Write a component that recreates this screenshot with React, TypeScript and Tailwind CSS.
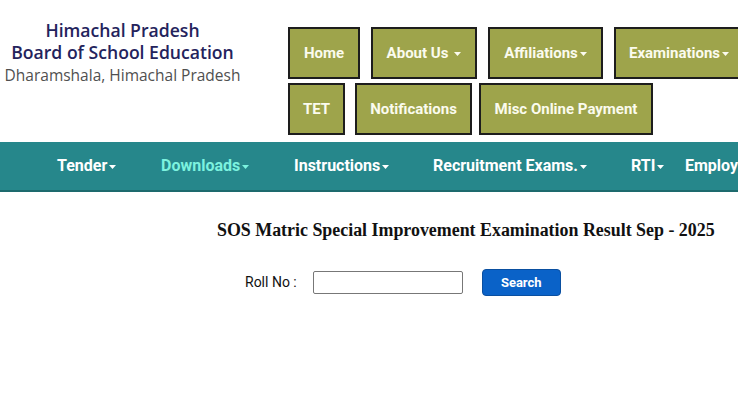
const Caret = ({ className = "" }: { className?: string }) => (
  <svg className={`inline-block w-[7px] h-[4px] ${className}`} viewBox="0 0 7 4" fill="currentColor">
    <path d="M0 0h7L3.5 4z" />
  </svg>
);

interface TopButtonProps {
  label: string;
  width: string;
  caret?: boolean;
  spaced?: boolean;
  extra?: string;
}

const TopButton = ({ label, width, caret, spaced, extra = "" }: TopButtonProps) => (
  <div
    className={`${width} ${extra} h-[52px] shrink-0 flex items-center justify-center bg-[#9ea44b] border-2 border-[#1d1d1d] text-[#fbfbee] text-[15px] font-bold`}
  >
    {label}
    {caret && <Caret className={spaced ? "ml-[6px] mt-[2px]" : "ml-[2px] mt-[2px]"} />}
  </div>
);

const navItems = [
  { label: "Tender", w: "w-[104px]", active: false },
  { label: "Downloads", w: "w-[133px]", active: true },
  { label: "Instructions", w: "w-[139px]", active: false },
  { label: "Recruitment Exams.", w: "w-[198px]", active: false },
  { label: "RTI", w: "w-[54px]", active: false },
];

export default function App() {
  return (
    <div className="w-[738px] h-[415px] overflow-hidden bg-white font-['Roboto',sans-serif]">
      {/* header */}
      <div className="flex h-[142px]">
        <div className="w-[245px] shrink-0 pt-[19px] text-center font-['Open_Sans',sans-serif] leading-[22px]">
          <div className="text-[17.6px] font-semibold text-[#24235c]">Himachal Pradesh</div>
          <div className="text-[17.6px] font-semibold text-[#24235c]">Board of School Education</div>
          <div className="text-[15.5px] text-[#505050] mt-[1px]">Dharamshala, Himachal Pradesh</div>
        </div>
        <div className="ml-[43px] pt-[27px] flex flex-col gap-[4px]">
          <div className="flex gap-[11px]">
            <TopButton label="Home" width="w-[72px]" />
            <TopButton label="About Us" width="w-[106px]" caret spaced />
            <TopButton label="Affiliations" width="w-[115px]" caret />
            <TopButton label="Examinations" width="w-[130px]" caret />
          </div>
          <div className="flex">
            <TopButton label="TET" width="w-[57px]" />
            <TopButton label="Notifications" width="w-[117px]" extra="ml-[10px]" />
            <TopButton label="Misc Online Payment" width="w-[174px]" extra="ml-[7px]" />
          </div>
        </div>
      </div>

      {/* main nav */}
      <div className="h-[50px] bg-[#26878b] border-b-2 border-[#1d6a6d] flex items-center whitespace-nowrap text-[16px] font-bold pl-[57px]">
        {navItems.map((item) => (
          <div
            key={item.label}
            className={`${item.w} shrink-0 flex items-center ${item.active ? "text-[#7cf2df]" : "text-white"}`}
          >
            {item.label}
            <Caret className="ml-[2px] mt-[2px]" />
          </div>
        ))}
        <div className="text-white">Employment</div>
      </div>

      {/* content */}
      <div className="pl-[217px] pt-[25px] whitespace-nowrap">
        <h1 className="font-['Liberation_Serif',serif] font-bold text-[17.9px] text-[#111]">
          SOS Matric Special Improvement Examination Result Sep - 2025
        </h1>
      </div>
      <div className="flex items-center pl-[245px] mt-[25px]">
        <span className="text-[14px] text-[#111]">Roll No :</span>
        <input
          type="text"
          className="ml-[16px] w-[150px] h-[23px] border border-[#777] rounded-[2px] outline-none"
        />
        <button className="ml-[19px] w-[79px] h-[27px] rounded-[4px] bg-[#0a62c8] border border-[#0a4fa0] text-white text-[13px] font-bold">
          Search
        </button>
      </div>
    </div>
  );
}
